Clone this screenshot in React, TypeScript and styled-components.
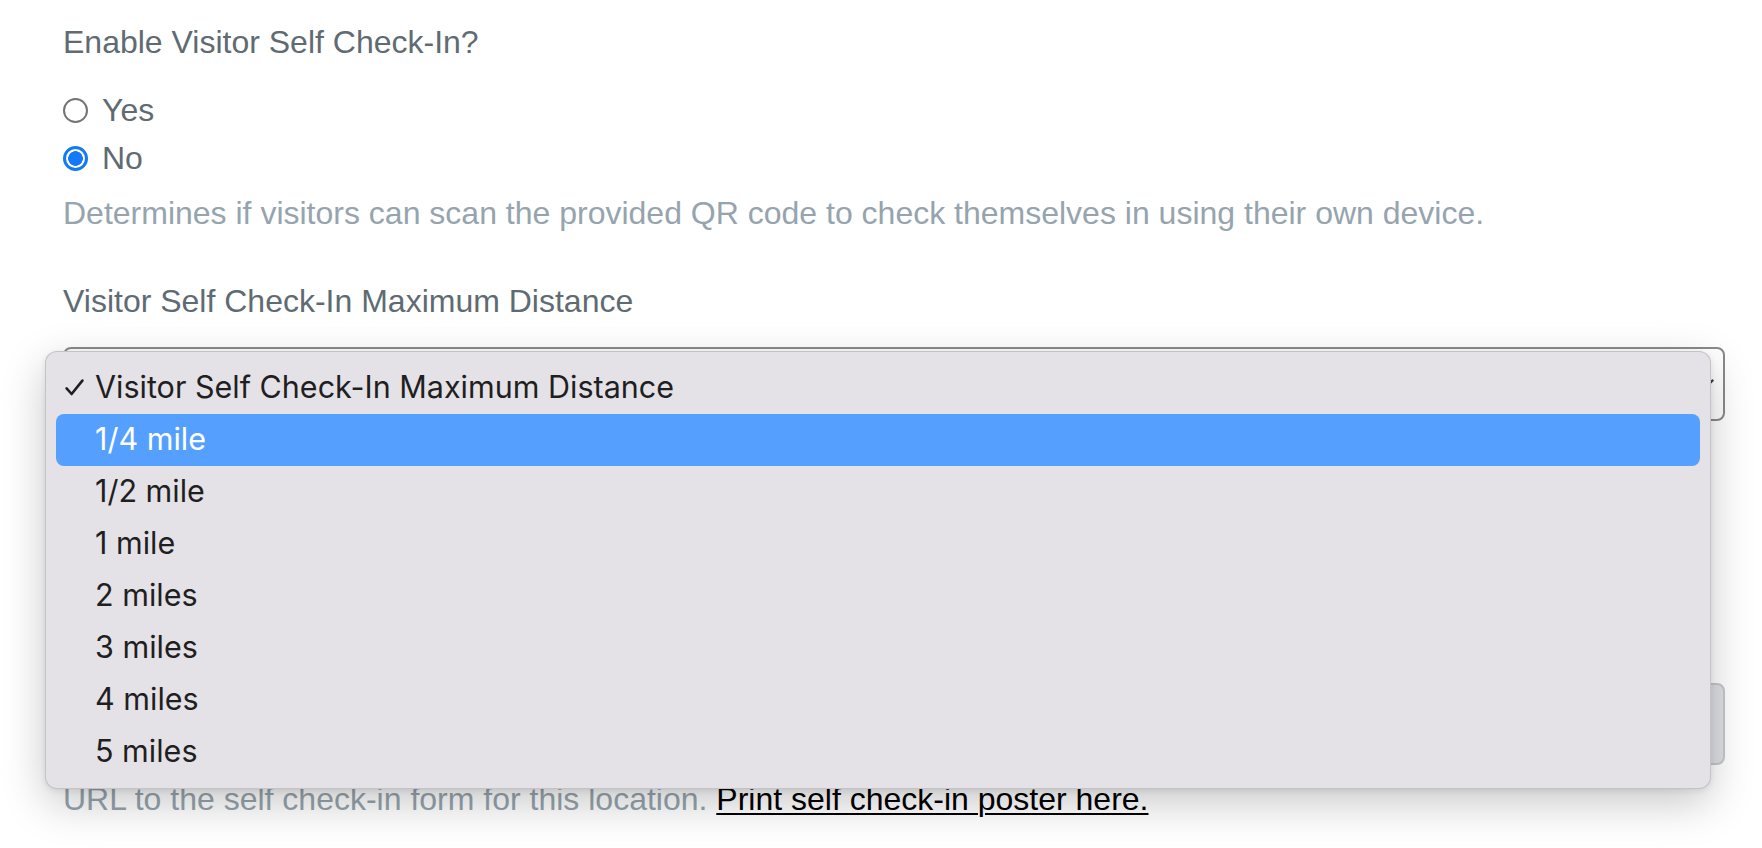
import React from 'react';
import styled, {createGlobalStyle} from 'styled-components';

const GlobalStyle = createGlobalStyle`
    html, body {
        margin: 0;
        padding: 0;
        background: #ffffff;
    }
    body {
        font-family: "Liberation Sans", Arial, sans-serif;
    }
`;

const Page = styled.div`
    position: relative;
    box-sizing: border-box;
    height: 848px;
    padding: 18px 37px 0 63px;
    overflow: hidden;
`;

const FormGroup = styled.div<{ $gap?: number }>`
    margin-bottom: ${(p) => p.$gap ?? 0}px;
`;

const Label = styled.div<{ $below?: number }>`
    font-size: 32px;
    line-height: 48px;
    color: #5f6b73;
    margin-bottom: ${(p) => p.$below ?? 16}px;
`;

const RadioRow = styled.label`
    display: flex;
    align-items: center;
    gap: 14px;
    height: 48px;
    font-size: 32px;
    color: #5f6b73;
`;

const Radio = styled.input`
    appearance: none;
    margin: 0;
    box-sizing: border-box;
    width: 25px;
    height: 25px;
    border-radius: 50%;
    border: 2px solid #747474;
    background: #ffffff;

    &:checked {
        border: 3px solid #1479f6;
        background: radial-gradient(circle, #1479f6 0 7px, #ffffff 7.6px);
    }
`;

const Help = styled.div<{ $top?: number }>`
    margin-top: ${(p) => p.$top ?? 7}px;
    font-size: 32px;
    line-height: 48px;
    color: #95a4ae;
`;

const Poster = styled.a`
    color: #000000;
    text-decoration: underline;
    text-decoration-thickness: 2px;
    text-underline-offset: 3px;
`;

const SelectBox = styled.div`
    box-sizing: border-box;
    height: 74px;
    display: flex;
    align-items: center;
    justify-content: flex-end;
    padding: 0 9px 0 24px;
    border: 2px solid #8a8a8a;
    border-radius: 8px;
`;

const InputGroup = styled.div`
    display: flex;
    height: 82px;
`;

const UrlInput = styled.div`
    flex: 1;
    border: 2px solid #ced4da;
    border-right: 0;
    border-radius: 8px 0 0 8px;
`;

const CopyButton = styled.div`
    width: 120px;
    box-sizing: border-box;
    border: 2px solid #c4c7cd;
    border-radius: 0 8px 8px 0;
    background: #dfe0e4;
`;

const Menu = styled.div`
    position: absolute;
    left: 45px;
    top: 351px;
    width: 1666px;
    box-sizing: border-box;
    padding: 10px;
    background: #e4e2e7;
    border: 1px solid rgba(0, 0, 0, 0.14);
    border-radius: 12px;
    box-shadow: 0 14px 44px rgba(0, 0, 0, 0.22), 0 2px 6px rgba(0, 0, 0, 0.08);
`;

const MenuItem = styled.div<{ $active?: boolean }>`
    display: grid;
    grid-template-columns: 39px 1fr;
    align-items: center;
    box-sizing: border-box;
    height: 52px;
    padding-bottom: 3px;
    border-radius: 8px;
    font-family: Inter, "Noto Sans", sans-serif;
    font-size: 30.5px;
    color: ${(p) => (p.$active ? '#ffffff' : '#1f1f1f')};
    background: ${(p) => (p.$active ? '#55a0fe' : 'transparent')};
`;

const CheckSlot = styled.span`
    display: flex;
    align-items: center;
    padding-left: 9px;
    padding-top: 2px;
`;

const options = ['1/4 mile', '1/2 mile', '1 mile', '2 miles', '3 miles', '4 miles', '5 miles'];

const Check = () => (
    <svg width="19" height="17" viewBox="0 0 19 17">
        <path d="M1.6 9.4 L6.6 15 L17.4 1.6" fill="none" stroke="#1f1f1f" strokeWidth="2.6"
              strokeLinecap="round" strokeLinejoin="round"/>
    </svg>
);

const Chevron = () => (
    <svg width="18" height="11" viewBox="0 0 18 11">
        <path d="M1.5 1.5 L9 9 L16.5 1.5" fill="none" stroke="#3a3a3a" strokeWidth="2.4" strokeLinecap="round"/>
    </svg>
);

export default function App() {
    return (
        <>
            <GlobalStyle/>
            <Page>
                <FormGroup $gap={40}>
                    <Label $below={20}>Enable Visitor Self Check-In?</Label>
                    <RadioRow><Radio type="radio" name="selfcheck"/>Yes</RadioRow>
                    <RadioRow><Radio type="radio" name="selfcheck" defaultChecked/>No</RadioRow>
                    <Help>Determines if visitors can scan the provided QR code to check themselves in using their own device.</Help>
                </FormGroup>

                {/* the select and the url field sit behind the open menu */}
                <FormGroup $gap={262}>
                    <Label $below={22}>Visitor Self Check-In Maximum Distance</Label>
                    <SelectBox>
                        <Chevron/>
                    </SelectBox>
                </FormGroup>

                <FormGroup>
                    <InputGroup>
                        <UrlInput/>
                        <CopyButton/>
                    </InputGroup>
                    <Help $top={10}>
                        URL to the self check-in form for this location. <Poster href="#">Print self check-in poster here.</Poster>
                    </Help>
                </FormGroup>

                <Menu>
                    <MenuItem>
                        <CheckSlot><Check/></CheckSlot>
                        <span>Visitor Self Check-In Maximum Distance</span>
                    </MenuItem>
                    {options.map((o, i) => (
                        <MenuItem key={o} $active={i === 0}>
                            <span/>
                            <span>{o}</span>
                        </MenuItem>
                    ))}
                </Menu>
            </Page>
        </>
    );
}
